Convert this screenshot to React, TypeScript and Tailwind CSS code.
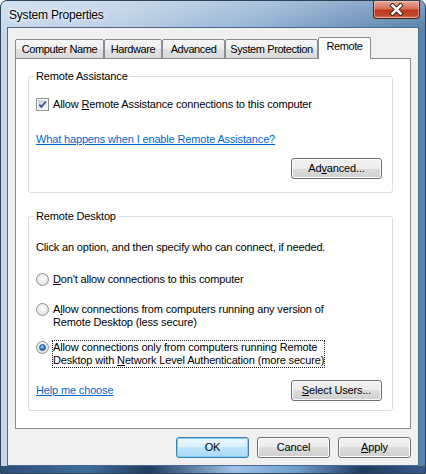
import React from "react";

function Btn({
  children,
  w,
  def,
}: {
  children: React.ReactNode;
  w: string;
  def?: boolean;
}) {
  return (
    <div
      className={
        def
          ? `${w} h-[21px] flex items-center justify-center rounded-[3px] border border-[#3c7fb1] bg-[linear-gradient(to_bottom,#eaf6fd_0%,#d9f0fc_50%,#bee6fd_50%,#a7d9f5_100%)] shadow-[inset_0_0_0_1px_#7fd0f7]`
          : `${w} h-[21px] flex items-center justify-center rounded-[3px] border border-[#707070] bg-[linear-gradient(to_bottom,#f2f2f2_0%,#ebebeb_50%,#dddddd_50%,#cfcfcf_100%)] shadow-[inset_0_0_0_1px_#fcfcfc]`
      }
    >
      {children}
    </div>
  );
}

function Radio({ checked }: { checked?: boolean }) {
  return (
    <div className="w-[13px] h-[13px] shrink-0 rounded-full border border-[#8e8f8f] bg-[radial-gradient(circle_at_50%_40%,#ffffff_0%,#f0f0f0_40%,#cfd3d8_100%)] flex items-center justify-center">
      {checked && (
        <div className="w-[7px] h-[7px] rounded-full border border-[#1d4e8c] bg-[radial-gradient(circle_at_40%_35%,#a9d4f7_0%,#3d8bd3_45%,#16519a_100%)]" />
      )}
    </div>
  );
}

function Tab({
  label,
  w,
  selected,
}: {
  label: string;
  w: string;
  selected?: boolean;
}) {
  return selected ? (
    <div
      className={`${w} h-[22px] flex items-start justify-center pt-[2px] bg-white border border-b-0 border-[#898c95] rounded-t-[2px] tracking-[-0.4px]`}
    >
      {label}
    </div>
  ) : (
    <div
      className={`${w} h-[20px] flex items-center justify-center bg-[linear-gradient(to_bottom,#f5f5f5_0%,#eeeeee_50%,#e3e3e3_50%,#d9d9d9_100%)] border border-[#898c95] rounded-t-[2px] tracking-[-0.4px]`}
    >
      {label}
    </div>
  );
}

export default function App() {
  return (
    <div className="w-[426px] h-[474px] flex flex-col overflow-hidden rounded-t-[7px] border border-[#2d4359] bg-[linear-gradient(to_bottom,rgba(255,255,255,0.25)_0%,rgba(255,255,255,0)_6%),linear-gradient(to_right,#c7d8ea_0%,#b8cde3_30%,#93b3d4_60%,#6c92ba_85%,#5a82ad_100%)] font-['Liberation_Sans',Arial,sans-serif] text-[11px] leading-[13px] text-black tracking-[-0.15px]">
      {/* Title bar */}
      <div className="h-[26px] flex items-start justify-between">
        <div className="pl-[8px] pt-[7px] text-[12px] leading-[14px] tracking-[-0.2px] [text-shadow:0_0_6px_#ffffff,0_0_3px_#ffffff]">
          System Properties
        </div>
        <div className="mr-[5px] w-[47px] h-[18px] rounded-b-[4px] border border-t-0 border-[#4b1f1a] bg-[linear-gradient(to_bottom,#e9a898_0%,#d8705b_45%,#c0381e_55%,#c24a2c_85%,#d8866c_100%)] shadow-[inset_0_0_0_1px_rgba(255,220,210,0.45)] flex items-center justify-center">
          <svg width="15" height="13" viewBox="0 0 15 13">
            <path d="M3.5 2.5 L11.5 10.5 M11.5 2.5 L3.5 10.5" stroke="#3a1a14" strokeWidth="4.4" strokeLinecap="square" />
            <path d="M3.5 2.5 L11.5 10.5 M11.5 2.5 L3.5 10.5" stroke="#ffffff" strokeWidth="2.6" strokeLinecap="square" />
          </svg>
        </div>
      </div>

      {/* Client area */}
      <div className="mx-[6px] border border-[#4f6987] bg-[#f0f0f0] flex flex-col pt-[9px] px-[7px] pb-[7px]">
        {/* Tabs */}
        <div className="relative z-10 -mb-px flex items-end h-[22px]">
          <Tab label="Computer Name" w="w-[89px]" />
          <Tab label="Hardware" w="w-[58px]" />
          <Tab label="Advanced" w="w-[63px]" />
          <Tab label="System Protection" w="w-[93px]" />
          <Tab label="Remote" w="w-[53px]" selected />
        </div>

        {/* Page */}
        <div className="h-[371px] bg-white border border-[#898c95] pt-[11px] pl-[12px] pr-[17px] pb-[17px] flex flex-col">
          <fieldset className="border border-[#d5dfe5] rounded-[3px] pl-[7px] pr-[10px] pb-[13px] flex flex-col">
            <legend className="px-[2px] -ml-[2px]">Remote Assistance</legend>
            <div className="mt-[15px] h-[13px] flex items-center gap-[4px]">
              <div className="w-[13px] h-[13px] shrink-0 border border-[#8e8f8f] bg-white p-px">
                <div className="w-full h-full bg-[linear-gradient(135deg,#c6ccd3_0%,#e6e9ed_60%,#f6f6f6_100%)] flex items-center justify-center">
                  <svg width="9" height="9" viewBox="0 0 9 9">
                    <path d="M1.3 4.6 L3.4 6.9 L7.8 1.6" fill="none" stroke="#3c5496" strokeWidth="1.7" />
                  </svg>
                </div>
              </div>
              <span>
                Allow <span className="underline">R</span>emote Assistance connections to this computer
              </span>
            </div>
            <div className="mt-[22px] h-[13px] text-[#0066cc] underline">
              What happens when I enable Remote Assistance?
            </div>
            <div className="mt-[12px] flex justify-end">
              <Btn w="w-[91px]">
                <span>
                  Ad<span className="underline">v</span>anced...
                </span>
              </Btn>
            </div>
          </fieldset>

          <fieldset className="mt-[17px] border border-[#d5dfe5] rounded-[3px] pl-[7px] pr-[10px] pb-[9px] flex flex-col">
            <legend className="px-[2px] -ml-[2px]">Remote Desktop</legend>
            <div className="mt-[18px] h-[13px]">
              Click an option, and then specify who can connect, if needed.
            </div>
            <div className="mt-[19px] flex items-center gap-[4px]">
              <Radio />
              <span>
                <span className="underline">D</span>on't allow connections to this computer
              </span>
            </div>
            <div className="mt-[17px] flex items-start gap-[4px]">
              <Radio />
              <span>
                A<span className="underline">l</span>low connections from computers running any version of
                <br />
                Remote Desktop (less secure)
              </span>
            </div>
            <div className="mt-[11px] flex items-start gap-[3px]">
              <div className="pt-px">
                <Radio checked />
              </div>
              <span className="border border-dotted border-[#222]">
                Allow connections only from computers running Remote
                <br />
                Desktop with <span className="underline">N</span>etwork Level Authentication (more secure)
              </span>
            </div>
            <div className="mt-[12px] flex items-center justify-between">
              <span className="text-[#0066cc] underline">Help me choose</span>
              <Btn w="w-[91px]">
                <span>
                  <span className="underline">S</span>elect Users...
                </span>
              </Btn>
            </div>
          </fieldset>
        </div>

        {/* Bottom buttons */}
        <div className="mt-[8px] flex justify-end gap-[8px]">
          <Btn w="w-[73px]" def>
            OK
          </Btn>
          <Btn w="w-[73px]">Cancel</Btn>
          <Btn w="w-[73px]">
            <span>
              <span className="underline">A</span>pply
            </span>
          </Btn>
        </div>
      </div>

      {/* Bottom frame */}
      <div className="flex-1 bg-[linear-gradient(to_right,#2b4e78_0%,#3f6d9c_20%,#1f3c60_35%,#9cc3e8_55%,#6d9ccc_70%,#1f3c60_85%,#34598a_100%)]" />
    </div>
  );
}
